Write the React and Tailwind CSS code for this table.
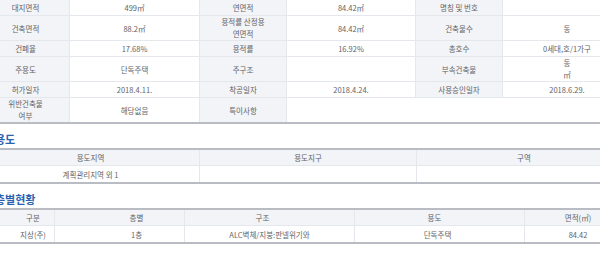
import React from "react";

const L = "bg-[#f2f4f7] border-b border-r border-[#e4e7eb] flex items-center justify-center text-center";
const V = "bg-white border-b border-r border-[#e4e7eb] flex items-center justify-center text-center";

function Heading({ children }) {
  return (
    <div className="h-[24px] pt-[8px] pl-[13px] text-[11px] leading-[14px] font-semibold text-[#2a62b0]">
      {children}
    </div>
  );
}

export default function App() {
  const rows = [
    { h: "h-[16px]", cells: ["대지면적", "499㎡", "연면적", "84.42㎡", "명칭 및 번호", ""] },
    { h: "h-[25px]", cells: ["건축면적", "88.2㎡", ["용적률 산정용", "연면적"], "84.42㎡", "건축물수", "동"] },
    { h: "h-[16px]", cells: ["건폐율", "17.68%", "용적률", "16.92%", "총호수", "0세대,호/1가구"] },
    { h: "h-[25px]", cells: ["주용도", "단독주택", "주구조", "", "부속건축물", ["동", "㎡"]] },
    { h: "h-[16px]", cells: ["허가일자", "2018.4.11.", "착공일자", "2018.4.24.", "사용승인일자", "2018.6.29."] },
  ];
  const render = (c) =>
    Array.isArray(c) ? (
      <div className="leading-[12px]">
        {c.map((t, i) => (
          <div key={i}>{t}</div>
        ))}
      </div>
    ) : (
      c
    );

  return (
    <div
      className="w-[600px] h-[254px] overflow-hidden bg-white text-[#5f6368] text-[7.5px] leading-[11px]"
      style={{ fontFamily: '"Noto Sans CJK KR", "Noto Sans", sans-serif' }}
    >
      <div className="w-[650px] -ml-[18px]">
        {/* Top table */}
        <div className="grid grid-cols-[88px_130px_87px_129px_87px_129px] border-b-2 border-[#b9bdc3]">
          {rows.map((r, ri) =>
            r.cells.map((c, ci) => (
              <div key={ri + "-" + ci} className={`${ci % 2 === 0 ? L : V} ${r.h}`}>
                {render(c)}
              </div>
            ))
          )}
          <div className={`${L} h-[24px] border-b-0`}>
            <div className="leading-[12px]">
              <div>위반건축물</div>
              <div>여부</div>
            </div>
          </div>
          <div className={`${V} h-[24px] border-b-0`}>해당없음</div>
          <div className={`${L} h-[24px] border-b-0`}>특이사항</div>
          <div className={`${V} h-[24px] border-b-0 col-span-3`}></div>
        </div>

        <Heading>용도</Heading>
        <div className="grid grid-cols-[218px_217px_215px] border-t-2 border-b-2 border-[#b9bdc3]">
          <div className={`${L} h-[16px]`}>용도지역</div>
          <div className={`${L} h-[16px]`}>용도지구</div>
          <div className={`${L} h-[16px]`}>구역</div>
          <div className={`${V} h-[16px] border-b-0`}>계획관리지역 외 1</div>
          <div className={`${V} h-[16px] border-b-0`}></div>
          <div className={`${V} h-[16px] border-b-0`}></div>
        </div>

        <Heading>층별현황</Heading>
        <div className="grid grid-cols-[73px_130px_170px_170px_107px] border-t-2 border-b-2 border-[#b9bdc3]">
          <div className={`${L} h-[16px] pl-[30px]`}>구분</div>
          <div className={`${L} h-[16px] pl-[34px]`}>층별</div>
          <div className={`${L} h-[16px] pr-[14px]`}>구조</div>
          <div className={`${L} h-[16px] pr-[10px]`}>용도</div>
          <div className={`${L} h-[16px]`}>면적(㎡)</div>
          <div className={`${V} h-[16px] border-b-0 pl-[30px]`}>지상(주)</div>
          <div className={`${V} h-[16px] border-b-0 pl-[34px]`}>1층</div>
          <div className={`${V} h-[16px] border-b-0`}>ALC벽체/지붕:판넬위기와</div>
          <div className={`${V} h-[16px] border-b-0 pr-[4px]`}>단독주택</div>
          <div className={`${V} h-[16px] border-b-0`}>84.42</div>
        </div>

        <div className="h-[24px] pt-[9px] pl-[15px] text-[11px] leading-[14px] font-semibold text-[#2a62b0]">
          소유자현황
        </div>
      </div>
    </div>
  );
}
